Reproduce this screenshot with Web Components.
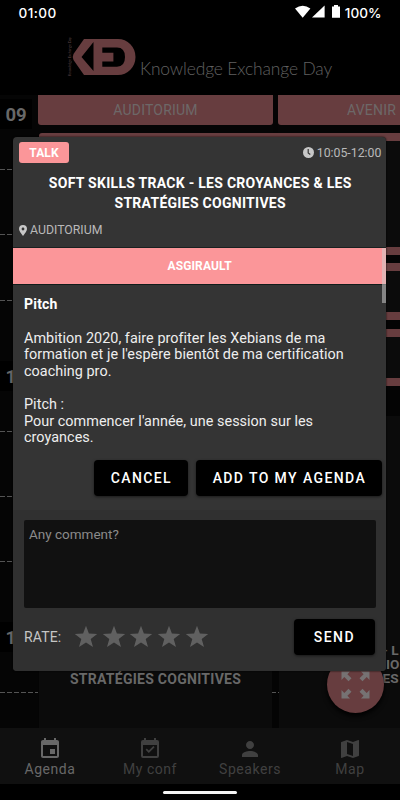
<!DOCTYPE html>
<html lang="fr"><head><meta charset="utf-8"><title>Knowledge Exchange Day</title>
<style>html,body{margin:0;background:#000}body{width:400px;height:800px;overflow:hidden;font-family:Roboto,sans-serif}</style></head>
<body><ked-app></ked-app>
<script>
const define = (name, html) => customElements.define(name, class extends HTMLElement {
  connectedCallback() {
    if (this.shadowRoot) return;
    const t = document.createElement('template');
    t.innerHTML = typeof html === 'function' ? html(this) : html;
    this.attachShadow({mode: 'open'}).append(t.content.cloneNode(true));
  }
});

define('status-bar', `<style>
:host{display:flex;height:24px;box-sizing:border-box;padding:0 18.5px 0 18.5px;align-items:center;color:#fff;font:500 13px/24px Inter,sans-serif;position:relative;z-index:3}
.time{letter-spacing:.4px;flex:1;font-size:13.6px;padding-top:1px}.pct{padding-top:1px;letter-spacing:0;font-size:13.6px}
svg{display:block;margin:0 3px 0 0}</style>
<span class="time">01:00</span>
<svg width="47" height="14" viewBox="0 0 47 14" fill="#fff"><path d="M0 3.6Q7.7-1.9 15.4 3.6L7.7 12.8Z"/><path d="M29.6 .6v12H17Z"/><path d="M39 .1h4V1.6h2v11.2h-8V1.6h2Z"/></svg>
<span class="pct">100%</span>`);

define('brand-header', `<style>
:host{display:flex;height:71px;align-items:flex-start;padding:13px 0 0 68px;box-sizing:border-box}
svg{display:block}.name{margin:21px 0 0 4px;font:300 17.4px/21px Lato,sans-serif;color:#606060;letter-spacing:-.12px;white-space:nowrap}
.side{writing-mode:vertical-rl;transform:rotate(180deg);font:3.6px/4px Lato,sans-serif;color:#5a4344;height:37px;width:4px;margin-top:2px;white-space:nowrap;letter-spacing:-.1px}</style>
<span class="side">Knowledge Exchange Day</span>
<svg width="64" height="40" viewBox="0 0 64 40"><path fill="#673d3f" fill-rule="evenodd" d="M12 2H46A17.5 18 0 0 1 46 38H12L1.5 23Q0 20 1.5 17ZM21.5 5L9.5 20L21.5 34ZM30.3 10.5V15.8H41.4V24.5H30.3V29.8H45Q53 29.5 53 20T45 10.5Z"/></svg>
<span class="name">Knowledge Exchange Day</span>`);

define('room-header', `<style>:host{display:block;height:30px;background:#673d3f;color:#6d6868;border-radius:0 0 3px 3px;text-align:center;font-size:14px;line-height:31px;letter-spacing:.2px;box-sizing:border-box}</style><slot></slot>`);

define('hour-rail', `<style>
:host{display:block;width:38px;height:633px;background:#050505;overflow:hidden}
.hour{height:261.5px;padding-top:4px;box-sizing:border-box}
b{display:block;width:32px;height:30px;background:#000;color:#686868;font-size:18.5px;line-height:32px;text-indent:5.5px;overflow:hidden}
i{display:block;height:1px;background:repeating-linear-gradient(90deg,#545454 0 5px,transparent 5px 7px);margin-bottom:64.4px}
i:first-of-type{margin-top:40px}</style>
${['09','10','11'].map(h=>`<div class="hour"><b>${h}</b><i></i><i></i><i></i></div>`).join('')}`);

define('fab-button', `<style>:host{display:block;width:57px;height:57px;border-radius:50%;background:#673d3f;box-shadow:0 3px 5px #000}svg{display:block}</style>
<svg width="57" height="57" viewBox="0 0 57 57" fill="#767273"><path id="p" d="M14.5 15.5H23L20.4 18.2L24.5 22.3L21.5 25.3L17.3 21.1L14.5 24Z"/>
<use href="#p" transform="matrix(-1 0 0 1 57 0)"/><use href="#p" transform="matrix(1 0 0 -1 0 58)"/><use href="#p" transform="matrix(-1 0 0 -1 57 58)"/></svg>`);

define('agenda-grid', `<style>
:host{display:grid;grid-template-columns:38px 235px 5px 122px;height:633px;overflow:hidden;width:400px;position:relative;background:#040404}
.col{display:flex;flex-direction:column;min-height:0}
.gap{height:8px;background:#050505;flex:none}
.card{background:#0b0b0b;border:0 solid #673d3f;border-width:8px 0;box-sizing:border-box;flex:none}
.first .card{height:595px;margin:0 1px 0 1px;border-width:8px 0 0;border-radius:3px 0 0 0;display:flex;align-items:flex-end;justify-content:center}
.label{font:700 14px/15px Roboto,sans-serif;color:#686868;text-align:center;padding-bottom:41px;white-space:nowrap;letter-spacing:.27px}
.mid{margin:38px -1px 0;border-top:8px solid #673d3f;display:flex;align-items:flex-end;height:595px;box-sizing:border-box}
.mid i{height:1px;width:7px;background:repeating-linear-gradient(90deg,#545454 0 4px,transparent 4px 6px);margin-bottom:35px}
.last .card{margin-left:1px}
.last .label{display:grid;justify-items:start;grid-auto-rows:14.4px;padding:226.5px 0 0 103.5px;line-height:14px;font-size:13.6px;letter-spacing:0}
fab-button{position:absolute;left:327px;top:561px}</style>
<hour-rail></hour-rail>
<div class="col first"><room-header>AUDITORIUM</room-header><div class="gap"></div><div class="card"><span class="label">STRATÉGIES COGNITIVES</span></div></div>
<div class="mid"><i></i></div>
<div class="col last"><room-header style="text-align:left;padding-left:69px;border-radius:0 0 0 3px">AVENIR</room-header><div class="gap"></div>
<div class="card" style="height:122px;margin-bottom:8px"></div>
<div class="card" style="height:57px;margin-bottom:9px"></div>
<div class="card" style="height:57px;margin-bottom:30px"></div>
<div class="card" style="border:0;height:320px"><div class="label"><span>- L</span><span style="margin-left:-5px">TIO</span><span>ES</span></div></div></div>
<fab-button></fab-button>`);

const icons = {
 agenda:'<path d="M17 12h-5v5h5v-5zM16 1v2H8V1H6v2H5c-1.11 0-1.99.9-1.99 2L3 19c0 1.1.89 2 2 2h14c1.1 0 2-.9 2-2V5c0-1.1-.9-2-2-2h-1V1h-2zm3 18H5V8h14v11z"/>',
 conf:'<path fill-rule="evenodd" d="M19 3h-1V1h-2v2H8V1H6v2H5a2 2 0 0 0-2 2v14a2 2 0 0 0 2 2h14a2 2 0 0 0 2-2V5a2 2 0 0 0-2-2zm0 16H5V8h14z"/><path d="M7.6 12.8l3.2 3.2 5.8-5.8-1.2-1.2-4.6 4.6-2-2z"/>',
 speaker:'<path d="M12 12c2.2 0 4-1.8 4-4s-1.8-4-4-4-4 1.8-4 4 1.8 4 4 4zm0 2c-2.7 0-8 1.3-8 4v2h16v-2c0-2.7-5.3-4-8-4z"/>',
 map:'<path d="M20.5 3l-.2 0L15 5.1 9 3 3.4 4.9c-.2.1-.4.3-.4.5v15.1c0 .3.2.5.5.5L9 18.9l6 2.1 5.6-1.9c.2-.1.4-.3.4-.5V3.5c0-.3-.2-.5-.5-.5zM15 19l-6-2.1V5l6 2.1V19z"/>'
};
define('tab-item', el=>`<style>:host{display:flex;flex-direction:column;align-items:center;flex:1;color:#404040;padding-top:9px;font-size:14px;line-height:16px;letter-spacing:.55px}:host([active]){color:#686868}svg{display:block;fill:currentColor}span{margin-top:1px}</style>
<svg width="24" height="24" viewBox="0 0 24 24">${icons[el.getAttribute('icon')]}</svg><span style="margin-top:0"><slot></slot></span>`);
define('tab-bar', `<style>:host{display:flex;height:56px;background:#101010}</style><slot></slot>`);
define('gesture-bar', `<style>:host{display:flex;height:16px;background:#000;justify-content:center}i{width:74px;height:2.6px;border-radius:2px;background:#f5f5f5;margin-top:7px}</style><i></i>`);

define('action-button', `<style>:host{display:block;height:36px;box-sizing:border-box;background:#000;color:#fff;border-radius:4px;font:500 14px/37px Roboto,sans-serif;letter-spacing:1.4px;text-align:center;box-shadow:0 1px 3px #0008;white-space:nowrap}</style><slot></slot>`);
define('star-rating', `<style>:host{display:flex;gap:3.7px}svg{fill:#606060;display:block}</style>${'<svg width="24" height="24" viewBox="0 0 24 24"><path d="M12 .8l2.9 7.8 8.3.3-6.5 5.2 2.3 8L12 17.5l-7 4.6 2.3-8L.8 8.9l8.3-.3z"/></svg>'.repeat(5)}`);

define('talk-dialog', `<style>
:host{display:flex;flex-direction:column;width:373.4px;height:534px;background:#343434;border-radius:4px;overflow:hidden;color:#fff;box-shadow:0 0 2px #000}
header{height:110px;box-sizing:border-box;padding:5px 5px 0 6px;flex:none}
.meta{display:flex;justify-content:space-between;align-items:center;height:21px}
.tag{width:50px;height:21px;border-radius:3px;background:#fb9699;text-align:center;font:700 12px/22px Roboto,sans-serif;letter-spacing:.1px}
.time,.room{display:flex;align-items:center;color:#b9b9b9;font-size:12.3px;line-height:16px}
.time svg{margin-right:3px}.room svg{margin-right:3px}
h1{font:700 14px/20px Roboto,sans-serif;text-align:center;margin:10px 0 0;letter-spacing:.28px}
.room{margin-top:9px}
.body{height:202px;position:relative;flex:none}
.speaker{height:36px;background:#fb9699;border-top:1px solid #192020;border-bottom:1px solid #111c1b;text-align:center;font:700 12px/36px Roboto,sans-serif;letter-spacing:.12px;box-sizing:content-box}
.scroll{position:absolute;right:0;top:1px;width:4.6px;height:55px;background:#ccc8}
article{padding:11px 11px 0;font-size:14.4px;line-height:16.6px;letter-spacing:.04px;color:#eee}
article b{color:#fff;font-size:14px;letter-spacing:.2px}p{margin:0 0 16.5px;white-space:nowrap}
p:first-child{margin-bottom:17.1px}
.actions{display:flex;justify-content:flex-end;gap:8px;padding:11px 4px 14px;height:36px;flex:none}
form{background:#303030;padding:9.5px 10.5px 0 11px;flex:1}
.area{height:88.5px;box-sizing:border-box;background:#111;border-radius:2px;padding:5px 5px;color:#8b8b8b;font-size:13.5px;line-height:18px}
.rate{display:flex;align-items:center;margin-top:10px;height:37px;color:#c5c5c5;font-size:14px;letter-spacing:.15px}
star-rating{margin-left:12.5px;flex:1}</style>
<header><div class="meta"><span class="tag">TALK</span><span class="time"><svg width="11" height="11" viewBox="0 0 11 11"><circle cx="5.5" cy="5.5" r="5.5" fill="#c7c7c7"/><path d="M5.2 2v4l2.1 1.5" fill="none" stroke="#343434" stroke-width="1.2"/></svg><span>10:05-12:00</span></span></div>
<h1>SOFT SKILLS TRACK - LES CROYANCES &amp; LES<br>STRATÉGIES COGNITIVES</h1>
<div class="room"><svg width="8" height="11" viewBox="0 0 8 11"><path fill="#c7c7c7" fill-rule="evenodd" d="M4 0a4 4 0 0 1 4 4C8 6 6 8 4 11 2 8 0 6 0 4a4 4 0 0 1 4-4zm0 2.6a1.4 1.4 0 1 0 0 2.8 1.4 1.4 0 0 0 0-2.8z"/></svg><span>AUDITORIUM</span></div></header>
<div class="body"><div class="speaker">ASGIRAULT</div><article><p><b>Pitch</b></p><p>Ambition 2020, faire profiter les Xebians de ma<br>formation et je l'espère bientôt de ma certification<br>coaching pro.</p><p>Pitch :<br>Pour commencer l'année, une session sur les<br>croyances.</p></article><div class="scroll"></div></div>
<div class="actions"><action-button style="width:94px">CANCEL</action-button><action-button style="width:186px">ADD TO MY AGENDA</action-button></div>
<form><div class="area">Any comment?</div><div class="rate"><span>RATE:</span><star-rating></star-rating><action-button style="width:81px;margin-right:1px">SEND</action-button></div></form>`);

define('ked-app', `<style>:host{display:flex;flex-direction:column;width:400px;height:800px;position:relative;background:#000;overflow:hidden}
talk-dialog{position:absolute;left:13px;top:137px}</style>
<status-bar></status-bar><brand-header></brand-header><agenda-grid></agenda-grid>
<tab-bar><tab-item icon="agenda" active>Agenda</tab-item><tab-item icon="conf">My conf</tab-item><tab-item icon="speaker">Speakers</tab-item><tab-item icon="map">Map</tab-item></tab-bar><gesture-bar></gesture-bar><talk-dialog></talk-dialog>`);
</script></body></html>
